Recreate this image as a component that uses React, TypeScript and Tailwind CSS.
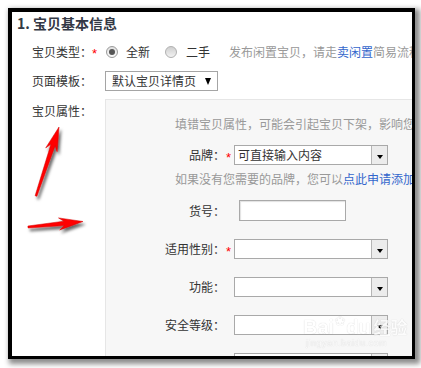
import React from "react";

const font = "font-['Noto_Sans_CJK_SC','Liberation_Sans',sans-serif]";

// tapered arrow outline from tail to tip
function arrowPoints(x1: number, y1: number, x2: number, y2: number, head: number, headW: number) {
  const dx = x2 - x1;
  const dy = y2 - y1;
  const len = Math.hypot(dx, dy);
  const ux = dx / len;
  const uy = dy / len;
  const nx = -uy;
  const ny = ux;
  const bx = x2 - ux * head;
  const by = y2 - uy * head;
  const nx2 = x2 - ux * (head - 5);
  const ny2 = y2 - uy * (head - 5);
  const p = (x: number, y: number) => `${x.toFixed(1)},${y.toFixed(1)}`;
  return [
    p(x1 + nx * 1, y1 + ny * 1),
    p(nx2 + nx * 2.2, ny2 + ny * 2.2),
    p(bx + nx * headW, by + ny * headW),
    p(x2, y2),
    p(bx - nx * headW, by - ny * headW),
    p(nx2 - nx * 2.2, ny2 - ny * 2.2),
    p(x1 - nx * 1, y1 - ny * 1),
  ].join(" ");
}

function Arrow() {
  return <span className="inline-block w-0 h-0 border-l-[3.5px] border-r-[3.5px] border-t-[4px] border-l-transparent border-r-transparent border-t-black" />;
}

function ComboBox({ text }: { text?: string }) {
  return (
    <div className="shrink-0 flex w-[154px] h-[20px] border border-[#a9a9a9] bg-white">
      <div className="flex-1 pl-[3px] text-[12px] leading-[18px] text-[#333]">{text}</div>
      <div className="w-[16px] h-full bg-[#ececec] border-l border-[#b5b5b5] flex items-center justify-center pt-[3px]">
        <Arrow />
      </div>
    </div>
  );
}

function Label({ text, required }: { text: string; required?: boolean }) {
  return (
    <>
      <div className="shrink-0 w-[119px] text-right text-[12px] text-[#333] leading-[18px]">{text}</div>
      <div className="shrink-0 w-[9px] pl-[1px] text-[13px] text-[#f00] leading-[18px] translate-y-[3px] font-['Liberation_Sans']">{required ? "*" : ""}</div>
    </>
  );
}

export default function App() {
  return (
    <div className={`w-[421px] h-[368px] bg-white pt-2 pl-2 ${font}`}>
      <div className="relative w-[407px] h-[351px] bg-white border-t-4 border-l-4 border-r-[3px] border-b-[3px] border-black overflow-hidden shadow-[3px_3px_5px_2px_rgba(0,0,0,0.45)]">
        {/* title */}
        <div className="pl-[5px] h-[22px] leading-[22px] text-[14px] font-bold text-[#333845] whitespace-nowrap">1. 宝贝基本信息</div>

        {/* 宝贝类型 */}
        <div className="mt-[8px] h-[20px] flex items-center pl-[20px] whitespace-nowrap text-[12px]">
          <div className="shrink-0 w-[60px] text-[#333]">宝贝类型：</div>
          <div className="shrink-0 w-[13px] text-[13px] text-[#f00] font-['Liberation_Sans'] translate-y-[2px]">*</div>
          <div className="shrink-0 ml-[1px] w-[12px] h-[12px] rounded-full border border-[#9a9a9a] bg-gradient-to-b from-[#e0e0e0] to-[#fafafa] flex items-center justify-center">
            <div className="w-[6px] h-[6px] rounded-full bg-[#555]" />
          </div>
          <div className="shrink-0 ml-[8px] text-[#333]">全新</div>
          <div className="shrink-0 ml-[15px] w-[12px] h-[12px] rounded-full border border-[#b0b0b0] bg-gradient-to-b from-[#cfcfcf] to-[#f2f2f2]" />
          <div className="shrink-0 ml-[9px] text-[#333]">二手</div>
          <div className="shrink-0 ml-[19px] text-[#999]">
            发布闲置宝贝，请走<span className="text-[#3366cc]">卖闲置</span>简易流程
          </div>
        </div>

        {/* 页面模板 */}
        <div className="mt-[9px] h-[20px] flex items-center pl-[20px] whitespace-nowrap text-[12px]">
          <div className="shrink-0 w-[73px] text-[#333]">页面模板：</div>
          <div className="shrink-0 w-[113px] h-[20px] border border-[#a5a5a5] flex items-center pl-[6px] pr-[6px] text-[#333]">
            <span className="flex-1">默认宝贝详情页</span>
            <span className="inline-block w-0 h-0 border-l-[3.5px] border-r-[3.5px] border-t-[7px] border-l-transparent border-r-transparent border-t-black" />
          </div>
        </div>

        {/* 宝贝属性 */}
        <div className="mt-[8px] flex pl-[20px] whitespace-nowrap">
          <div className="shrink-0 w-[73px] mt-[3px] text-[12px] leading-[18px] text-[#333]">宝贝属性：</div>
          <div className="shrink-0 w-[360px] h-[300px] bg-[#f7f7f7] border-l border-t border-[#e6e6e6] pt-[15px]">
            <div className="pl-[69px] text-[12px] leading-[18px] text-[#999]">填错宝贝属性，可能会引起宝贝下架，影响您</div>

            <div className="mt-[12px] flex items-center h-[20px]">
              <Label text="品牌：" required />
              <ComboBox text="可直接输入内容" />
            </div>

            <div className="mt-[5px] pl-[69px] text-[12px] leading-[18px] text-[#999]">
              如果没有您需要的品牌，您可以<span className="text-[#3366cc]">点此申请添加</span>
            </div>

            <div className="mt-[12px] flex items-center h-[21px]">
              <Label text="货号：" />
              <div className="shrink-0 ml-[5px] w-[107px] h-[21px] border border-[#a9a9a9] bg-white shadow-[inset_1px_1px_1px_rgba(0,0,0,0.12)]" />
            </div>

            <div className="mt-[18px] flex items-center h-[20px]">
              <Label text="适用性别：" required />
              <ComboBox />
            </div>

            <div className="mt-[18px] flex items-center h-[20px]">
              <Label text="功能：" />
              <ComboBox />
            </div>

            <div className="mt-[18px] flex items-center h-[20px]">
              <Label text="安全等级：" />
              <ComboBox />
            </div>

            <div className="mt-[18px] flex items-center h-[20px]">
              <Label text="" />
              <ComboBox />
            </div>
          </div>
        </div>

        {/* red arrows */}
        <svg className="absolute left-0 top-0 pointer-events-none" width="400" height="344">
          <defs>
            <filter id="sh" x="-50%" y="-50%" width="200%" height="200%">
              <feDropShadow dx="2" dy="3" stdDeviation="1.6" floodColor="#000" floodOpacity="0.6" />
            </filter>
          </defs>
          <g filter="url(#sh)" fill="#ff0000" stroke="#d00000" strokeWidth="0.5">
            <polygon points={arrowPoints(24, 184, 47, 115, 24, 6)} />
            <polygon points={arrowPoints(16, 215, 71, 209.5, 24, 6)} />
          </g>
        </svg>

        {/* watermark */}
        <div className="absolute left-[291px] top-[302px] pointer-events-none text-white opacity-70 [text-shadow:0_0_1px_rgba(0,0,0,0.3)] whitespace-nowrap">
          <div className="flex items-end font-['Liberation_Sans'] text-[20px] font-bold leading-[22px]">
            <span>Bai</span>
            <span className="text-[12px] leading-[14px] mb-[10px] mx-[1px]">❀</span>
            <span>du</span>
            <span className={`${font} text-[17px] ml-[3px]`}>经验</span>
          </div>
          <div className="font-['Liberation_Sans'] text-[9px] leading-[10px] ml-[3px] tracking-[0.5px]">jingyan.baidu.com</div>
        </div>
      </div>
    </div>
  );
}
